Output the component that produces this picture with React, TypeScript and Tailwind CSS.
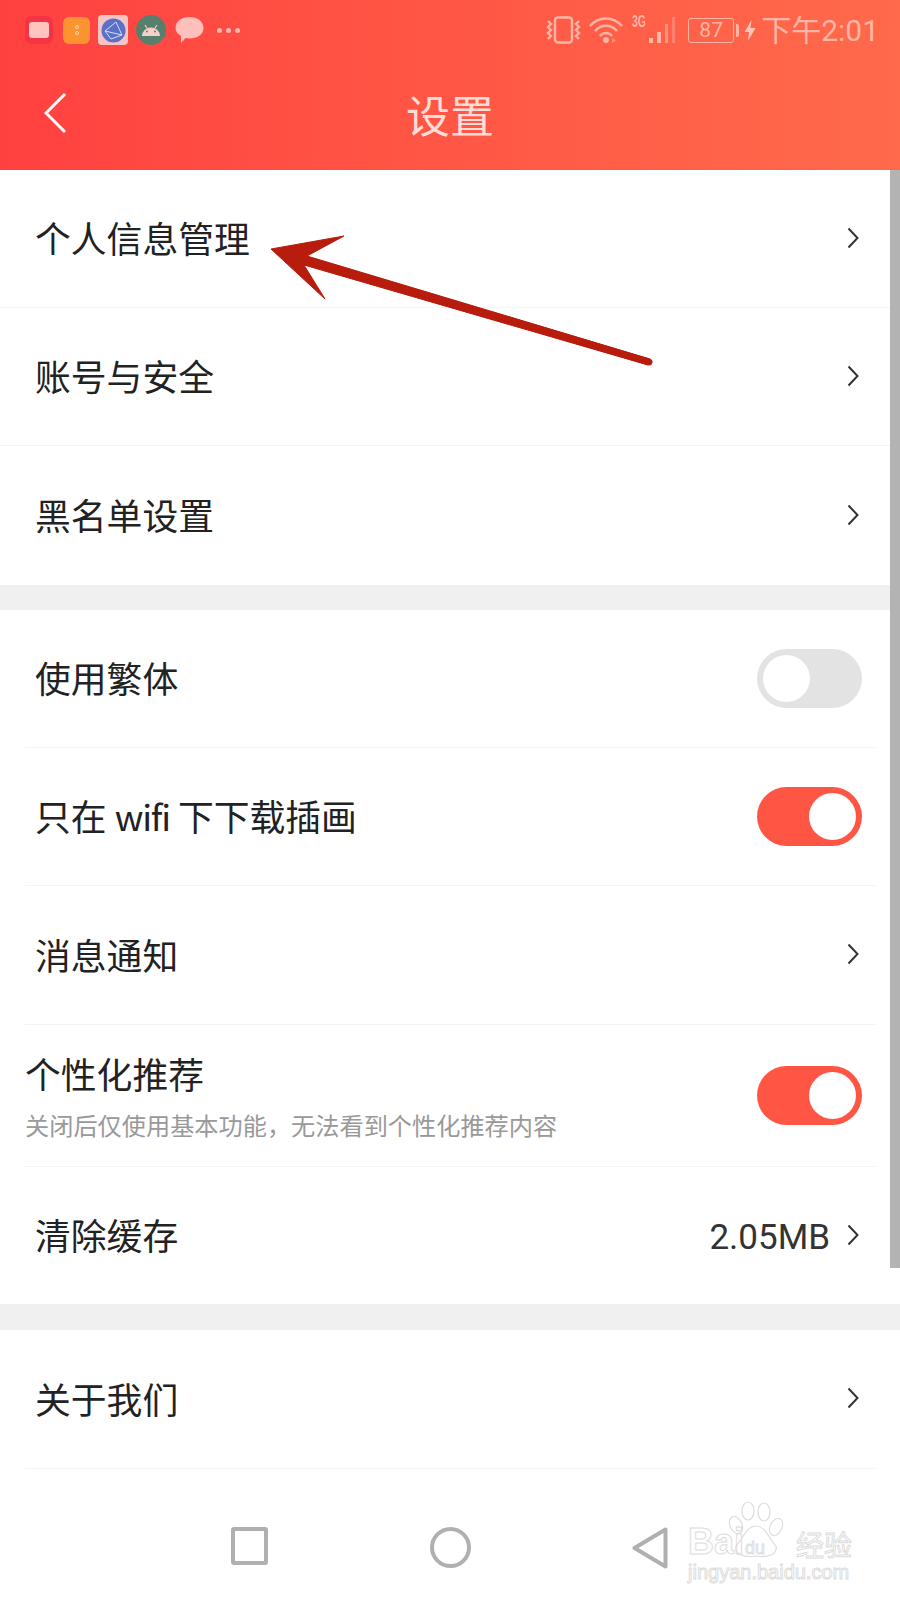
import React from "react";

const CJK = "font-['Noto_Sans_CJK_SC','Noto_Sans',sans-serif]";

function Chevron() {
  return (
    <svg width="12" height="22" viewBox="0 0 12 22" className="mt-[-2px] shrink-0">
      <path d="M1.5 1.5 L10.5 11 L1.5 20.5" fill="none" stroke="#333" strokeWidth="2" />
    </svg>
  );
}

function Toggle({ on }: { on: boolean }) {
  return (
    <div className={`flex h-[59px] w-[105px] items-center rounded-full px-[6px] ${on ? "justify-end bg-[#ff5544]" : "justify-start bg-[#e3e3e3]"}`}>
      <div className="h-[47px] w-[47px] rounded-full bg-white" />
    </div>
  );
}

function Row({ label, h, inset, last, right }: { label: React.ReactNode; h: string; inset?: boolean; last?: boolean; right: React.ReactNode }) {
  return (
    <div className={`${inset ? "mx-[25px] pl-[10px]" : "pl-[35px] pr-[41px]"} ${h} flex items-center justify-between ${last ? "" : "border-b border-[#f3f3f3]"}`}>
      <span className="mb-[1px] text-[35.800px] leading-none text-[#222]">{label}</span>
      <div className={inset ? "mr-[16px] flex items-center gap-[17px]" : ""}>{right}</div>
    </div>
  );
}

function LeftStatusIcons() {
  return (
    <div className="flex items-center">
      <div className="ml-[25px] flex h-[28px] w-[28px] items-center justify-center rounded-[7px] bg-[#f43345]">
        <div className="h-[16px] w-[20px] rounded-[3px] bg-[#ffc4c0]" />
      </div>
      <div className="ml-[10px] flex h-[27px] w-[27px] flex-col items-center justify-center gap-[2px] rounded-[6px] bg-[#fb9430]">
        <div className="h-[4px] w-[4px] rounded-full border border-[#ffd9a8]" />
        <div className="h-[4px] w-[4px] rounded-full border border-[#ffd9a8]" />
      </div>
      <div className="ml-[8px] flex h-[30px] w-[30px] items-center justify-center rounded-[4px] bg-[#f5c4c4]">
        <svg width="25" height="25" viewBox="0 0 25 25">
          <circle cx="12.5" cy="12.5" r="12" fill="#5b70c8" />
          <path d="M4 13 L15 4 L21 17 Z M4 13 L10 21 L21 17" fill="none" stroke="#d8dcf2" strokeWidth="1" />
        </svg>
      </div>
      <svg width="30" height="30" viewBox="0 0 30 30" className="ml-[8px]">
        <circle cx="15" cy="15" r="15" fill="#57806c" />
        <path d="M6 21 a9 8.5 0 0 1 18 0 Z" fill="#f5cfc8" />
        <circle cx="11" cy="16.5" r="1" fill="#57806c" />
        <circle cx="19" cy="16.5" r="1" fill="#57806c" />
        <path d="M9 10 L11 13 M21 10 L19 13" stroke="#f5cfc8" strokeWidth="1.2" />
      </svg>
      <svg width="29" height="28" viewBox="0 0 29 28" className="ml-[9px]">
        <path d="M14.5 1 C22.5 1 28.5 5.5 28.5 12 C28.5 18.5 22 22.5 14.5 22.5 C13 22.5 11.5 22.3 10.5 22 L6 27 L6 20 C2.5 18 0.5 15 0.5 12 C0.5 5.5 6.5 1 14.5 1 Z" fill="#ffc0bb" />
      </svg>
      <div className="ml-[13px] flex gap-[4px]">
        <div className="h-[5px] w-[5px] rounded-full bg-[#ffb9ae]" />
        <div className="h-[5px] w-[5px] rounded-full bg-[#ffb9ae]" />
        <div className="h-[5px] w-[5px] rounded-full bg-[#ffb9ae]" />
      </div>
    </div>
  );
}

function RightStatusIcons() {
  const c = "#ffb5a5";
  return (
    <div className="flex items-center">
      <svg width="36" height="28" viewBox="0 0 36 28">
        <rect x="9" y="1.5" width="17" height="25" rx="3" fill="none" stroke={c} strokeWidth="2.4" />
        <path d="M2 5 L5 8 L2 11 L5 14 L2 17 L5 20 L2 23 M33 5 L30 8 L33 11 L30 14 L33 17 L30 20 L33 23" fill="none" stroke={c} strokeWidth="2.4" />
      </svg>
      <svg width="34" height="28" viewBox="0 0 34 28" className="ml-[7px]">
        <path d="M1 10 C10 0 24 0 33 10 M6 15 C12 8 22 8 28 15 M11 20 C14 16 20 16 23 20" fill="none" stroke={c} strokeWidth="2.6" />
        <circle cx="17" cy="24" r="3" fill={c} />
        <path d="M23 22 L23 27 L27 24.500 Z" fill={c} opacity="0.6" />
      </svg>
      <div className="relative ml-[11px] h-[28px] w-[44px]">
        <span className="absolute left-[-2px] top-[-2px] origin-left scale-x-[0.65] font-['Liberation_Sans',sans-serif] text-[16px] font-bold leading-[16px] text-[#ffb5a5]">3G</span>
        <svg width="44" height="28" viewBox="0 0 44 28" className="absolute left-0 top-0">
          <rect x="15" y="22" width="4" height="5" fill={c} />
          <rect x="23" y="16" width="4" height="11" fill={c} />
          <rect x="31" y="8" width="3" height="19" fill={c} opacity="0.6" />
          <rect x="38" y="1" width="3" height="26" fill={c} opacity="0.4" />
        </svg>
      </div>
      <div className="ml-[10px] flex h-[25px] w-[46px] items-center justify-center rounded-[3px] border border-[#ffb5a5] text-[21px] leading-none text-[#ffb5a5] font-['Roboto',sans-serif]">
        87
      </div>
      <div className="ml-[2px] h-[13px] w-[3px] rounded-r-[2px] bg-[#ffb5a5]" />
      <svg width="12" height="21" viewBox="0 0 12 21" className="ml-[5px]">
        <path d="M7.500 0 L0.500 12 L5 12 L4 21 L11.500 8 L6.500 8 Z" fill="#ffc4b5" />
      </svg>
      <span className="ml-[5px] mt-[2px] text-[30px] leading-none text-[#ffb5a5] font-['Roboto','Noto_Sans_CJK_SC',sans-serif]">下午2:01</span>
    </div>
  );
}

export default function App() {
  return (
    <div className={`relative h-[1600px] w-[900px] overflow-hidden bg-white ${CJK}`}>
      <header className="h-[170px] bg-gradient-to-r from-[#ff4040] to-[#ff6a4b]">
        <div className="flex h-[60px] items-center justify-between pr-[21px]">
          <LeftStatusIcons />
          <RightStatusIcons />
        </div>
        <div className="relative flex h-[110px] items-center justify-center pb-[2px]">
          <svg width="24" height="42" viewBox="0 0 24 42" className="absolute left-[44px] top-[32px]">
            <path d="M21 2 L2 21 L21 40" fill="none" stroke="#fff" strokeWidth="3" />
          </svg>
          <h1 className="text-[44px] leading-none text-[#ffdcd5]">设置</h1>
        </div>
      </header>

      <section>
        <Row label="个人信息管理" h="h-[138px]" right={<Chevron />} />
        <Row label="账号与安全" h="h-[138px]" right={<Chevron />} />
        <Row label="黑名单设置" h="h-[139px]" last right={<Chevron />} />
      </section>
      <div className="h-[25px] bg-[#f0f0f0]" />
      <section>
        <Row label="使用繁体" h="h-[138px]" inset right={<div className="-mr-[3px]"><Toggle on={false} /></div>} />
        <Row label={<>只在 <span className="tracking-[-1.200px]">wifi</span> 下下载插画</>} h="h-[138px]" inset right={<div className="-mr-[3px]"><Toggle on /></div>} />
        <Row label="消息通知" h="h-[139px]" inset right={<Chevron />} />
        <div className="mx-[25px] flex h-[142px] items-center justify-between border-b border-[#f3f3f3] pr-[13px]">
          <div>
            <div className="text-[35.800px] leading-[44px] text-[#222]">个性化推荐</div>
            <div className="mt-[14px] text-[24.200px] leading-[32px] text-[#999]">关闭后仅使用基本功能，无法看到个性化推荐内容</div>
          </div>
          <Toggle on />
        </div>
        <Row label="清除缓存" h="h-[137px]" inset last right={
          <>
            <span className="mt-[3px] text-[35px] leading-none text-[#333] font-['Roboto',sans-serif]">2.05MB</span>
            <Chevron />
          </>
        } />
      </section>
      <div className="h-[26px] bg-[#f0f0f0]" />
      <section>
        <Row label="关于我们" h="h-[139px]" inset right={<Chevron />} />
      </section>

      <nav className="flex h-[131px] items-start pl-[231px] pt-[58px]">
        <div className="h-[38px] w-[37px] rounded-[3px] border-[4px] border-[#b0b0b0]" />
        <div className="ml-[162px] h-[41px] w-[41px] rounded-full border-[4px] border-[#b0b0b0]" />
        <svg width="36" height="42" viewBox="0 0 36 42" className="ml-[161px]">
          <path d="M33.500 2.500 L33.500 39.500 L2.500 21 Z" fill="none" stroke="#b0b0b0" strokeWidth="4" strokeLinejoin="round" />
        </svg>
      </nav>

      {/* overlay scrollbar */}
      <div className="absolute right-0 top-[170px] h-[1098px] w-[10px] bg-[#b3b3b3]" />

      {/* annotation arrow */}
      <svg width="900" height="400" viewBox="0 0 900 400" className="pointer-events-none absolute left-0 top-0">
        <path d="M271 249 L344 236 L307 256 L650 359 L648 365 L304 265 L325 299 Z" fill="#b81c0c" stroke="#b81c0c" strokeWidth="1" strokeLinejoin="round" />
        <line x1="307" y1="260" x2="649" y2="362" stroke="#b81c0c" strokeWidth="7" strokeLinecap="round" />
      </svg>

      {/* watermark */}
      <div className="pointer-events-none absolute left-[688px] top-[1500px] h-[84px] w-[170px] text-transparent [-webkit-text-stroke:1px_#dddddd]">
        <svg width="60" height="60" viewBox="0 0 60 60" className="absolute left-[36px] top-[0px]">
          <g fill="#fff" stroke="#dddddd" strokeWidth="1.200">
            <ellipse cx="12" cy="25" rx="6" ry="9" transform="rotate(-25 12 25)" />
            <ellipse cx="24" cy="11" rx="6" ry="9" />
            <ellipse cx="40" cy="12" rx="6" ry="9" />
            <ellipse cx="52" cy="27" rx="6" ry="9" transform="rotate(25 52 27)" />
            <path d="M32 26 C42 26 47 42 52 46 C54 54 44 58 32 56 C20 58 10 54 12 46 C17 42 22 26 32 26 Z" />
          </g>
        </svg>
        <span className="absolute left-0 top-[22px] font-['Liberation_Sans',sans-serif] text-[36px] font-bold leading-[40px]">Bai</span>
        <span className="absolute left-[57px] top-[38px] font-['Liberation_Sans',sans-serif] text-[18px] leading-[20px]">du</span>
        <span className="absolute left-[108px] top-[28px] text-[28px] leading-[32px]">经验</span>
        <span className="absolute left-0 top-[60px] font-['Liberation_Sans',sans-serif] text-[20px] leading-[24px]">jingyan.baidu.com</span>
      </div>
    </div>
  );
}
